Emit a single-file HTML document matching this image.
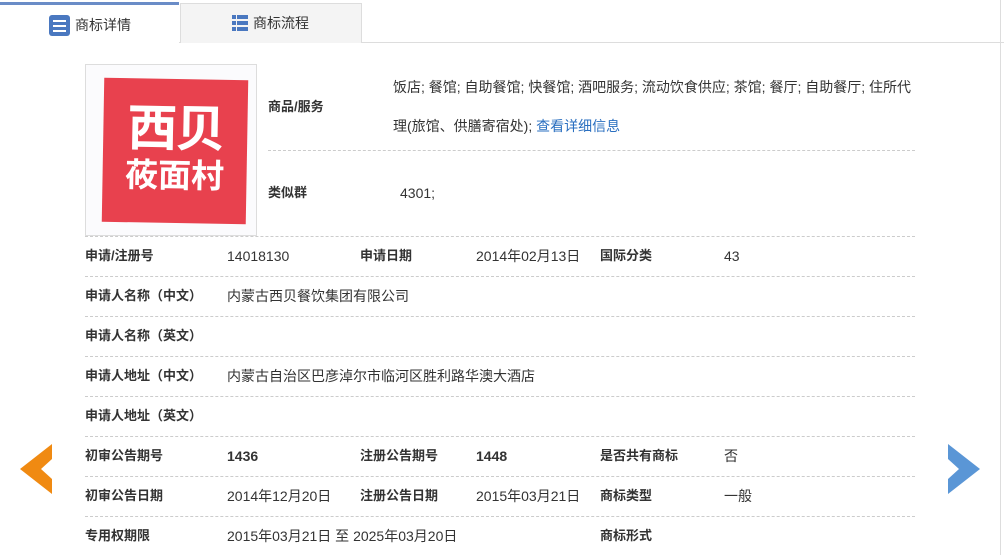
<!DOCTYPE html>
<html><head><meta charset="utf-8"><style>
body{margin:0;width:1004px;height:555px;overflow:hidden;background:#fff;font-family:"Liberation Sans","Noto Sans CJK SC",sans-serif;font-size:14px;color:#333;position:relative}
.a{position:absolute;white-space:nowrap;line-height:18px}
.b{font-weight:bold;color:#333;font-size:13px}
.line{position:absolute;height:0;border-top:1px dashed #ccc}
</style></head><body>
<div class="a" style="left:0;top:42px;width:1004px;border-top:1px solid #ddd"></div>
<div class="a" style="left:0;top:2px;width:179px;height:41px;border-top:3px solid #6a8cc7;background:#fff"></div>
<div class="a" style="left:180px;top:3px;width:180px;height:39px;background:#f4f4f4;border:1px solid #ddd;border-bottom:none"></div>
<svg class="a" style="left:49px;top:15px" width="21" height="21"><rect width="21" height="21" rx="3" fill="#4a78c0"/><rect x="4" y="5" width="13" height="2" fill="#fff"/><rect x="4" y="10" width="13" height="2" fill="#fff"/><rect x="4" y="15" width="13" height="2" fill="#fff"/></svg>
<div class="a" style="left:75px;top:16px;font-size:14px">商标详情</div>
<svg class="a" style="left:232px;top:15px" width="16" height="16" fill="#4a78c0"><rect x="0" y="0" width="4" height="4"/><rect x="5" y="0" width="11" height="4"/><rect x="0" y="6" width="4" height="4"/><rect x="5" y="6" width="11" height="4"/><rect x="0" y="12" width="4" height="4"/><rect x="5" y="12" width="11" height="4"/></svg>
<div class="a" style="left:253px;top:14px;font-size:14px">商标流程</div>

<div class="a" style="left:85px;top:64px;width:170px;height:170px;border:1px solid #ddd;background:#fbfbfd"></div>
<div class="a" style="left:103px;top:79px;width:144px;height:144px;background:#e8414e;transform:rotate(1deg);color:#fff;text-align:center;font-weight:bold;line-height:normal">
<div style="font-size:50px;line-height:52px;margin-top:24px;letter-spacing:-2px">西贝</div>
<div style="font-size:33px;line-height:38px;margin-top:2px">莜面村</div></div>

<div class="a b" style="left:268px;top:98px">商品/服务</div>
<div class="a" style="left:393px;top:78px">饭店; 餐馆; 自助餐馆; 快餐馆; 酒吧服务; 流动饮食供应; 茶馆; 餐厅; 自助餐厅; 住所代</div>
<div class="a" style="left:393px;top:117px">理(旅馆、供膳寄宿处); <span style="color:#2a6fc0">查看详细信息</span></div>
<div class="line" style="left:268px;top:150px;width:647px"></div>
<div class="a b" style="left:268px;top:184px">类似群</div>
<div class="a" style="left:400px;top:184px">4301;</div>

<div class="line" style="left:85px;top:236px;width:830px"></div>
<div class="line" style="left:85px;top:276px;width:830px"></div>
<div class="line" style="left:85px;top:316px;width:830px"></div>
<div class="line" style="left:85px;top:356px;width:830px"></div>
<div class="line" style="left:85px;top:396px;width:830px"></div>
<div class="line" style="left:85px;top:436px;width:830px"></div>
<div class="line" style="left:85px;top:476px;width:830px"></div>
<div class="line" style="left:85px;top:516px;width:830px"></div>

<div class="a b" style="left:85px;top:247px">申请/注册号</div><div class="a" style="left:227px;top:247px">14018130</div>
<div class="a b" style="left:360px;top:247px">申请日期</div><div class="a" style="left:476px;top:247px">2014年02月13日</div>
<div class="a b" style="left:600px;top:247px">国际分类</div><div class="a" style="left:724px;top:247px">43</div>

<div class="a b" style="left:85px;top:287px">申请人名称（中文）</div><div class="a" style="left:227px;top:287px">内蒙古西贝餐饮集团有限公司</div>
<div class="a b" style="left:85px;top:327px">申请人名称（英文）</div>
<div class="a b" style="left:85px;top:367px">申请人地址（中文）</div><div class="a" style="left:227px;top:367px">内蒙古自治区巴彦淖尔市临河区胜利路华澳大酒店</div>
<div class="a b" style="left:85px;top:407px">申请人地址（英文）</div>

<div class="a b" style="left:85px;top:447px">初审公告期号</div><div class="a b" style="left:227px;top:447px;font-size:14px">1436</div>
<div class="a b" style="left:360px;top:447px">注册公告期号</div><div class="a b" style="left:476px;top:447px;font-size:14px">1448</div>
<div class="a b" style="left:600px;top:447px">是否共有商标</div><div class="a" style="left:724px;top:447px">否</div>

<div class="a b" style="left:85px;top:487px">初审公告日期</div><div class="a" style="left:227px;top:487px">2014年12月20日</div>
<div class="a b" style="left:360px;top:487px">注册公告日期</div><div class="a" style="left:476px;top:487px">2015年03月21日</div>
<div class="a b" style="left:600px;top:487px">商标类型</div><div class="a" style="left:724px;top:487px">一般</div>

<div class="a b" style="left:85px;top:527px">专用权期限</div><div class="a" style="left:227px;top:527px">2015年03月21日 至 2025年03月20日</div>
<div class="a b" style="left:600px;top:527px">商标形式</div>

<svg class="a" style="left:18px;top:443px" width="36" height="52"><polygon points="2,26 34,1 34,16 23,26 34,36 34,51" fill="#f08a12"/></svg>
<svg class="a" style="left:946px;top:443px" width="36" height="52"><polygon points="34,26 2,1 2,16 13,26 2,36 2,51" fill="#5a96d6"/></svg>
<div class="a" style="left:1000px;top:0;height:555px;border-left:1px solid #ddd"></div>
</body></html>
